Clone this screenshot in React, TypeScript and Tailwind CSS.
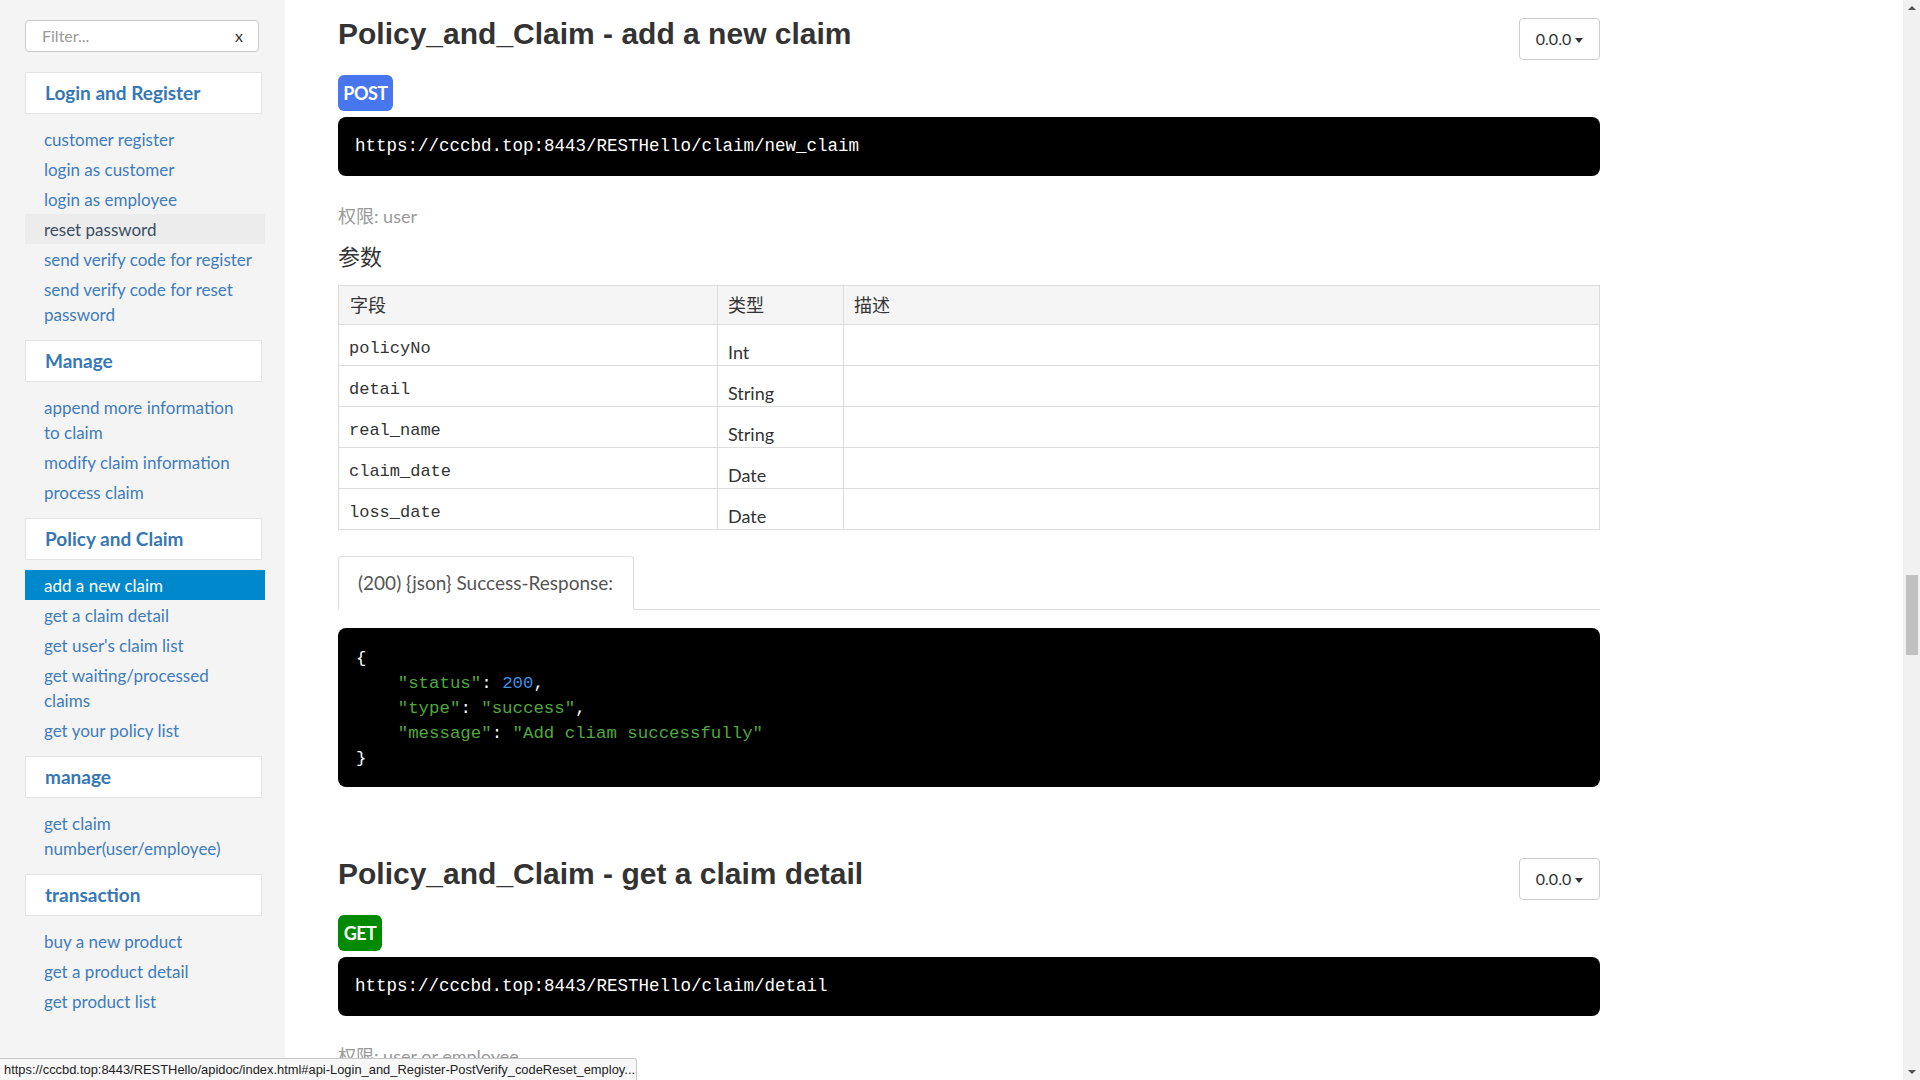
import React from "react"

type NavItem = { label: string; state?: "hover" | "active" }
type NavGroup = { title: string; items: NavItem[] }

const groups: NavGroup[] = [
  {
    title: "Login and Register",
    items: [
      { label: "customer register" },
      { label: "login as customer" },
      { label: "login as employee" },
      { label: "reset password", state: "hover" },
      { label: "send verify code for register" },
      { label: "send verify code for reset\npassword" },
    ],
  },
  {
    title: "Manage",
    items: [
      { label: "append more information\nto claim" },
      { label: "modify claim information" },
      { label: "process claim" },
    ],
  },
  {
    title: "Policy and Claim",
    items: [
      { label: "add a new claim", state: "active" },
      { label: "get a claim detail" },
      { label: "get user's claim list" },
      { label: "get waiting/processed\nclaims" },
      { label: "get your policy list" },
    ],
  },
  {
    title: "manage",
    items: [{ label: "get claim\nnumber(user/employee)" }],
  },
  {
    title: "transaction",
    items: [
      { label: "buy a new product" },
      { label: "get a product detail" },
      { label: "get product list" },
    ],
  },
]

const params = [
  { field: "policyNo", type: "Int" },
  { field: "detail", type: "String" },
  { field: "real_name", type: "String" },
  { field: "claim_date", type: "Date" },
  { field: "loss_date", type: "Date" },
]

const Sidebar = () => (
  <aside className="w-[285px] shrink-0 bg-[#f4f4f4] pl-[25px] pt-[20px]">
    <div className="flex h-[32px] w-[234px] items-center justify-between rounded-[4px] border border-[#cccccc] bg-white pl-[16px] pr-[15px] text-[16px]">
      <span className="text-[#999999]">Filter...</span>
      <span className="text-[#333333]">x</span>
    </div>
    <div className="mt-[20px]">
      {groups.map((group) => (
        <div key={group.title} className="mb-[11px]">
          <div className="flex h-[42px] w-[237px] items-center border border-[#e5e5e5] bg-white pl-[19px] text-[19px] font-bold text-[#3677b5]">
            {group.title}
          </div>
          <ul className="mt-[10px] w-[240px]">
            {group.items.map((item) => (
              <li
                key={item.label}
                className={
                  "whitespace-pre-line py-[2.5px] pl-[19px] text-[17px] leading-[25px] " +
                  (item.state === "active"
                    ? "bg-[#0088cc] text-white"
                    : item.state === "hover"
                      ? "bg-[#ececec] text-[#3b4e63]"
                      : "text-[#3f7cbb]")
                }
              >
                {item.label}
              </li>
            ))}
          </ul>
        </div>
      ))}
    </div>
  </aside>
)

const VersionButton = () => (
  <div className="flex h-[42px] w-[81px] shrink-0 items-center justify-center gap-[4px] rounded-[4px] border border-[#cccccc] bg-white text-[16px] text-[#333333]">
    <span>0.0.0</span>
    <span className="mt-[2px] h-0 w-0 border-x-[4px] border-t-[5px] border-x-transparent border-t-[#333333]" />
  </div>
)

const Endpoint = ({
  title,
  method,
  url,
  permission,
  children,
}: {
  title: string
  method: "POST" | "GET"
  url: string
  permission: string
  children?: React.ReactNode
}) => (
  <section className="h-[840px]">
    <div className="flex items-start justify-between">
      <h2 className="-mt-[1px] font-['Liberation_Sans',Arial,sans-serif] text-[30px] font-bold leading-[33px] text-[#333333]">
        {title}
      </h2>
      <VersionButton />
    </div>
    <div
      className={
        "mt-[15px] flex h-[36px] items-center justify-center rounded-[6px] text-[18px] font-bold tracking-[-0.5px] text-white " +
        (method === "POST" ? "w-[55px] bg-[#4776ee]" : "w-[44px] bg-[#008a00]")
      }
    >
      {method}
    </div>
    <div className="mt-[6px] flex h-[59px] items-center rounded-[8px] bg-black px-[17px] font-['Liberation_Mono',monospace] text-[17.5px] text-white">
      {url}
    </div>
    <p className="mt-[27px] text-[18px] leading-[26px] text-[#999999]">权限: {permission}</p>
    {children}
  </section>
)

const ParamTable = () => (
  <div className="mt-[13px] border border-[#dddddd]">
    <div className="grid h-[38px] grid-cols-[378px_126px_1fr] bg-[#f5f5f5] text-[18px] text-[#333333]">
      <div className="flex items-center px-[11px]">字段</div>
      <div className="flex items-center border-l border-[#dddddd] px-[10px]">类型</div>
      <div className="flex items-center border-l border-[#dddddd] px-[10px]">描述</div>
    </div>
    {params.map((p) => (
      <div key={p.field} className="grid h-[41px] grid-cols-[378px_126px_1fr] border-t border-[#dddddd] text-[#333333]">
        <div className="px-[10px] pt-[12px] font-['Liberation_Mono',monospace] text-[17px] leading-[24px]">
          {p.field}
        </div>
        <div className="border-l border-[#dddddd] px-[10px] pt-[15px] text-[18px] leading-[24px]">{p.type}</div>
        <div className="border-l border-[#dddddd]" />
      </div>
    ))}
  </div>
)

const ResponseBlock = () => (
  <>
    <div className="mt-[26px] flex border-b border-[#dddddd]">
      <div className="-mb-px flex h-[54px] w-[296px] items-center rounded-t-[4px] border border-b-white border-[#dddddd] bg-white px-[19px] text-[19px] text-[#555555]">
        (200) {"{json}"} Success-Response:
      </div>
    </div>
    <pre className="mt-[18px] h-[159px] rounded-[8px] bg-black px-[18px] pt-[18px] font-['Liberation_Mono',monospace] text-[17.4px] leading-[25px] text-white">
      {"{\n    "}
      <span className="text-[#4fa83d]">"status"</span>: <span className="text-[#3d8fe6]">200</span>
      {",\n    "}
      <span className="text-[#4fa83d]">"type"</span>: <span className="text-[#4fa83d]">"success"</span>
      {",\n    "}
      <span className="text-[#4fa83d]">"message"</span>: <span className="text-[#4fa83d]">"Add cliam successfully"</span>
      {"\n}"}
    </pre>
  </>
)

const Scrollbar = () => (
  <div className="flex w-[17px] shrink-0 flex-col items-center justify-between bg-[#f1f1f1]">
    <div className="flex w-full flex-col items-center">
      <span className="mt-[6px] h-0 w-0 border-x-[4px] border-b-[4px] border-x-transparent border-b-[#505050]" />
      <div className="mt-[565px] h-[80px] w-[12px] bg-[#c1c1c1]" />
    </div>
    <span className="mb-[6px] h-0 w-0 border-x-[4px] border-t-[4px] border-x-transparent border-t-[#505050]" />
  </div>
)

export default function App() {
  return (
    <div className="relative flex h-[1080px] overflow-hidden bg-white font-['Lato','Noto_Sans_CJK_SC',sans-serif]">
      <Sidebar />
      <main className="min-w-0 flex-1 pl-[53px] pt-[18px]">
        <div className="w-[1262px]">
          <Endpoint
            title="Policy_and_Claim - add a new claim"
            method="POST"
            url="https://cccbd.top:8443/RESTHello/claim/new_claim"
            permission="user"
          >
            <h3 className="mt-[13px] text-[22px] leading-[30px] text-[#333333]">参数</h3>
            <ParamTable />
            <ResponseBlock />
          </Endpoint>
          <Endpoint
            title="Policy_and_Claim - get a claim detail"
            method="GET"
            url="https://cccbd.top:8443/RESTHello/claim/detail"
            permission="user or employee"
          />
        </div>
      </main>
      <Scrollbar />
      <div className="absolute bottom-0 left-0 flex h-[22px] w-[637px] items-center rounded-tr-[3px] border-r border-t border-[#c8c8c8] bg-[#f7f7f7] pl-[4px] font-['Liberation_Sans',Arial,sans-serif] text-[12.9px] text-[#222222]">
        https://cccbd.top:8443/RESTHello/apidoc/index.html#api-Login_and_Register-PostVerify_codeReset_employ...
      </div>
    </div>
  )
}
